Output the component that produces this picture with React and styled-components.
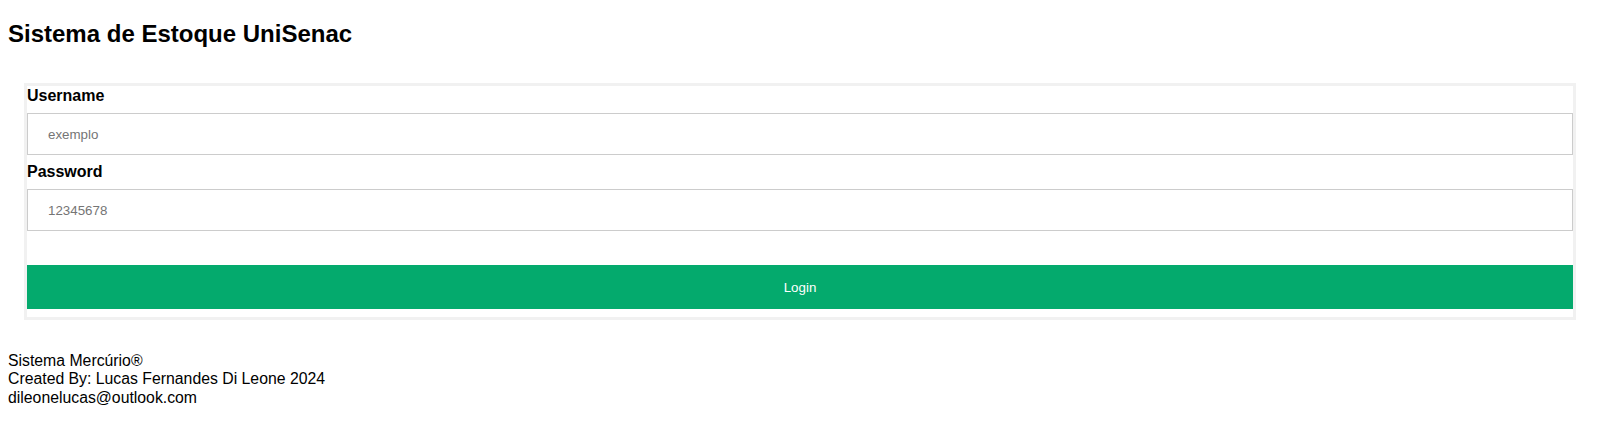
import styled, { createGlobalStyle } from "styled-components";

const GlobalStyle = createGlobalStyle`
  body {
    margin: 0;
    background: #fff;
    font-family: "Liberation Sans", Arial, sans-serif;
    color: #000;
  }
`;

const fields = [
  { name: "username", label: "Username", placeholder: "exemplo", type: "text" },
  { name: "password", label: "Password", placeholder: "12345678", type: "password" },
];

const App = () => {
  return (
    <>
      <GlobalStyle />
      <Page>
        <Title>Sistema de Estoque UniSenac</Title>
        <FormBox onSubmit={(e) => e.preventDefault()}>
          {fields.map((f) => (
            <Field key={f.name}>
              <Label htmlFor={f.name}>{f.label}</Label>
              <Input id={f.name} name={f.name} type={f.type} placeholder={f.placeholder} />
            </Field>
          ))}
          <LoginBtn type="submit">Login</LoginBtn>
        </FormBox>
        <Footer>
          <span>Sistema Mercúrio®</span>
          <span>Created By: Lucas Fernandes Di Leone 2024</span>
          <span>dileonelucas@outlook.com</span>
        </Footer>
      </Page>
    </>
  );
};

export default App;

const Page = styled.div`
  display: flex;
  flex-direction: column;
  padding: 8px;
`;

const Title = styled.h2`
  margin: 12px 0 35px;
  font-size: 24px;
  line-height: 28px;
  font-weight: 700;
`;

const FormBox = styled.form`
  display: flex;
  flex-direction: column;
  margin: 0 16px;
  padding-top: 1px;
  border: 3px solid #f1f1f1;
  background: #fff;
`;

const Field = styled.div`
  display: flex;
  flex-direction: column;
`;

const Label = styled.label`
  font-size: 16px;
  line-height: 18px;
  font-weight: 700;
`;

const Input = styled.input`
  box-sizing: border-box;
  width: 100%;
  height: 42px;
  margin: 8px 0;
  padding: 12px 20px;
  border: 1px solid #ccc;
  font-family: "Liberation Sans", Arial, sans-serif;
  font-size: 13.33px;
  outline: none;
  &::placeholder {
    color: #757575;
  }
`;

const LoginBtn = styled.button`
  width: 100%;
  height: 44px;
  margin: 26px 0 8px;
  padding: 14px 20px;
  background: #04aa6d;
  color: #fff;
  border: none;
  font-family: "Liberation Sans", Arial, sans-serif;
  font-size: 13.33px;
  cursor: pointer;
`;

const Footer = styled.footer`
  display: flex;
  flex-direction: column;
  margin-top: 32px;
  font-size: 15.8px;
  line-height: 18.4px;
`;
